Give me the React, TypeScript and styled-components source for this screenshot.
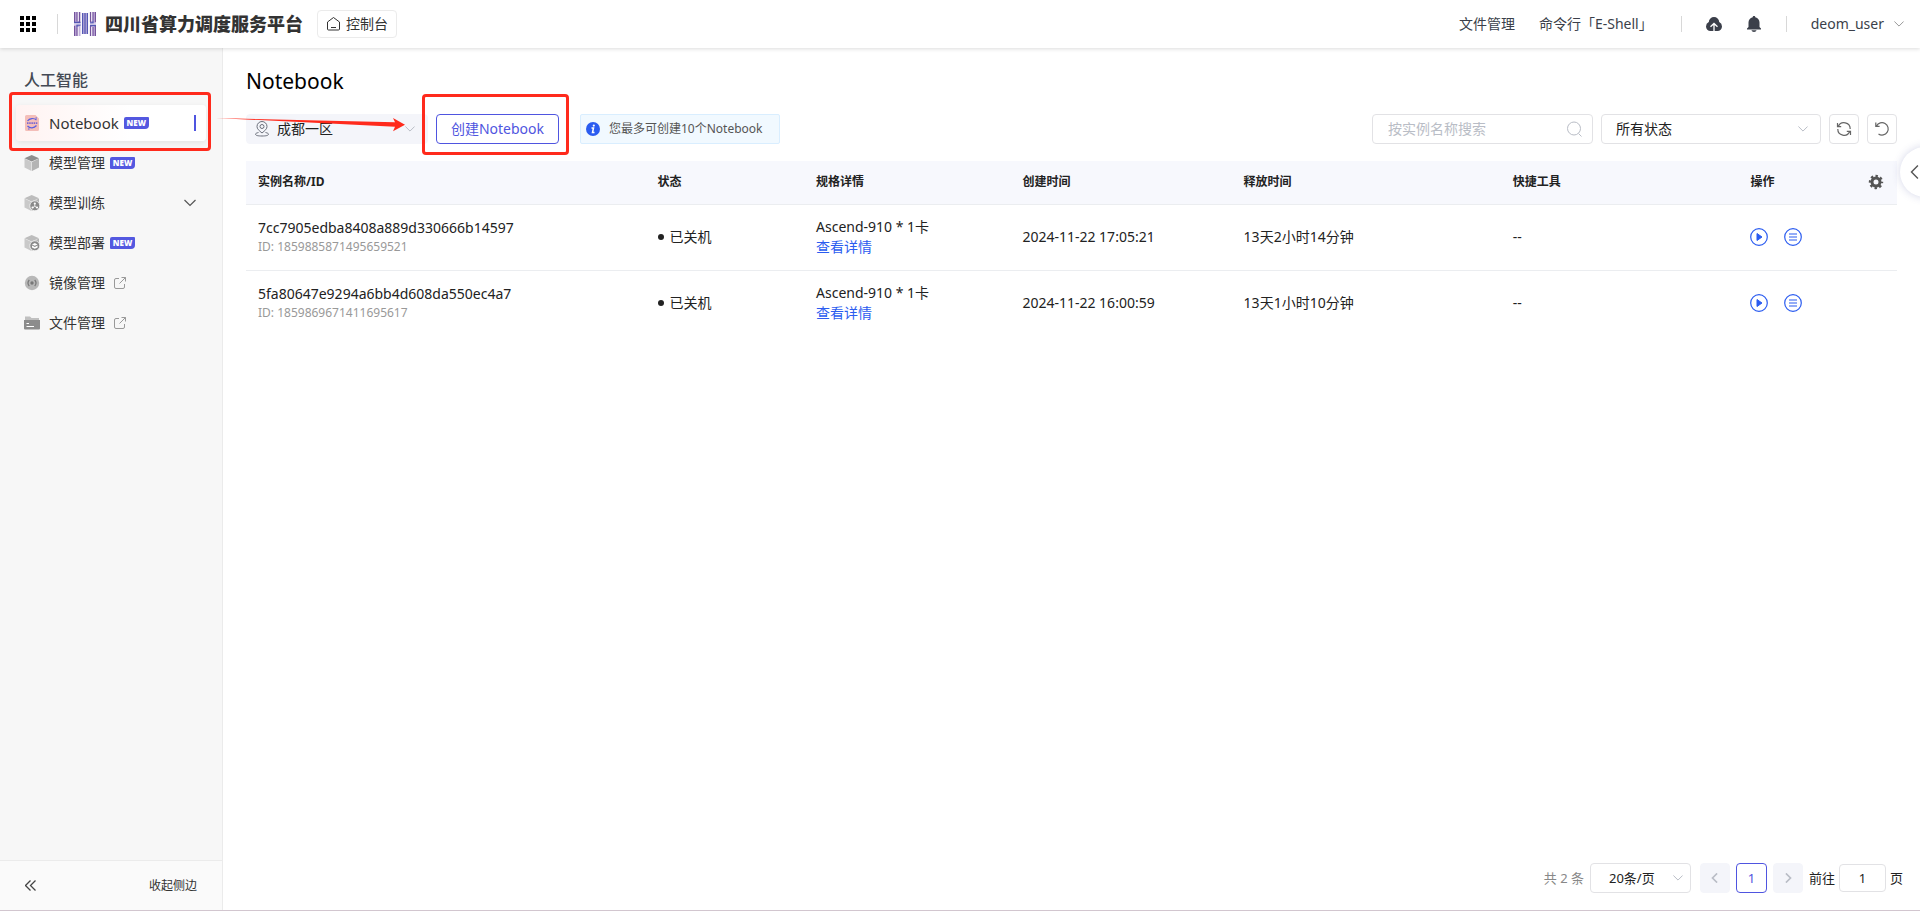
import React from "react";
import styled, { createGlobalStyle, css } from "styled-components";

const Global = createGlobalStyle`
  *, *::before, *::after { box-sizing: border-box; }
  body { margin: 0; background: #fff; color: #222; font: 14px/20px "Noto Sans", "Noto Sans CJK SC", sans-serif; }
  button, input, select { font: inherit; color: inherit; margin: 0; }
  button { cursor: pointer; padding: 0; background: none; border: 0; }
  h1, h2, ul { margin: 0; padding: 0; }
  a { text-decoration: none; color: inherit; }
  svg { display: block; flex: none; }
`;

const Page = styled.div`
  min-height: 100vh;
  display: flex;
  flex-direction: column;
  overflow: hidden;
  border-bottom: 1px solid #d2c6cf;
`;

const Header = styled.header`
  height: 48px;
  display: flex;
  align-items: center;
  padding: 0 16px 0 20px;
  background: #fff;
  box-shadow: 0 1px 4px rgba(0, 0, 0, 0.14);
  position: relative;
  z-index: 2;
`;
const Divider = styled.span<{ $h: number }>`
  width: 1px;
  height: ${(p) => p.$h}px;
  background: #d8d8d8;
`;
const Brand = styled.a`
  display: flex;
  align-items: center;
  gap: 9px;
  margin: 0 14px 0 16px;
  font-size: 18px;
  line-height: 24px;
  font-weight: 900;
  color: #333;
  white-space: nowrap;
`;
const AppsButton = styled.button`
  margin-right: 21px;
`;
const ConsoleLink = styled.a`
  display: flex;
  align-items: center;
  gap: 5px;
  height: 28px;
  padding: 0 8px;
  border: 1px solid #ebebeb;
  border-radius: 4px;
  color: #333;
`;
const HeaderNav = styled.nav`
  margin-left: auto;
  display: flex;
  align-items: center;
  gap: 24px;
  color: #3b3f4a;
  white-space: nowrap;
`;
const ShellLink = styled.a`
  margin-right: 4px;
`;
const UserButton = styled.button`
  display: flex;
  align-items: center;
  gap: 10px;
`;

const Body = styled.div`
  flex: 1;
  display: flex;
`;
const Sidebar = styled.aside`
  width: 223px;
  flex: none;
  display: flex;
  flex-direction: column;
  background: #f7f7f7;
  border-right: 1px solid #ebebeb;
`;
const SideTitle = styled.h2`
  padding: 20px 24px 0;
  font-size: 16px;
  line-height: 24px;
  font-weight: 500;
  color: #444a55;
`;
const Menu = styled.ul`
  list-style: none;
  padding: 13px 16px 0;
  display: flex;
  flex-direction: column;
  gap: 4px;
`;
const MenuItem = styled.li`
  position: relative;
`;
const MenuText = styled.span`
  margin: 0 5px 0 9px;
`;
const MenuLink = styled.a<{ $active?: boolean }>`
  display: flex;
  align-items: center;
  height: 36px;
  padding: 0 10px 0 8px;
  border-radius: 4px;
  color: #333;
  ${(p) =>
    p.$active &&
    css`
      font-size: 15px;
      background: linear-gradient(90deg, #fff3f2, #fff 60%);
      box-shadow: 0 2px 6px rgba(0, 0, 0, 0.08);
    `}
`;
const NewBadge = styled.span`
  height: 12px;
  width: 25px;
  text-align: center;
  border-radius: 2px 1px 4px 1px;
  background: #5358e0;
  color: #fff;
  font: 800 8px/12px "Open Sans", "Noto Sans", sans-serif;
`;
const ExternalMark = styled.span`
  margin-left: 4px;
`;
const ActiveBar = styled.i`
  width: 2px;
  height: 16px;
  margin-left: auto;
  background: #4f55e0;
`;
const Push = styled.span`
  margin-left: auto;
`;
const Collapse = styled.button`
  margin-top: auto;
  height: 50px;
  border-top: 1px solid #ebebeb;
  background: #fafafa;
  display: flex;
  align-items: center;
  justify-content: space-between;
  padding: 0 25px;
  font-size: 12px;
  color: #333;
`;

const Highlight = styled.div`
  position: absolute;
  inset: -13px -5px -10px -7px;
  border: 3px solid #ff2a1c;
  border-radius: 4px;
  pointer-events: none;
`;

const Main = styled.main`
  flex: 1;
  min-width: 0;
  display: flex;
  flex-direction: column;
  padding: 20px 23px 17px;
  position: relative;
`;
const Title = styled.h1`
  font-size: 21px;
  line-height: 26px;
  font-weight: 400;
  color: #000;
`;
const Toolbar = styled.div`
  display: flex;
  align-items: center;
  gap: 8px;
  margin: 20px 0 17px;
`;
const SelectWrap = styled.label<{ $kind?: "region" | "page" }>`
  position: relative;
  display: flex;
  align-items: center;
  height: 30px;
  width: ${(p) => (p.$kind === "region" ? 182 : p.$kind === "page" ? 101 : 220)}px;
  padding-right: ${(p) => (p.$kind === "page" ? 7 : 12)}px;
  border-radius: 4px;
  border: 1px solid ${(p) => (p.$kind === "region" ? "#f4f5fa" : "#e2e2e5")};
  background: ${(p) => (p.$kind === "region" ? "#f4f5fa" : "#fff")};
  padding-left: ${(p) => (p.$kind === "region" ? 8 : p.$kind === "page" ? 18 : 14)}px;
  select {
    appearance: none;
    border: 0;
    background: none;
    outline: none;
    flex: 1;
    min-width: 0;
    padding: 0 0 0 ${(p) => (p.$kind === "region" ? 8 : 0)}px;
  }
`;
const CreateBox = styled.div`
  position: relative;
  margin-right: 13px;
`;
const CreateButton = styled.button`
  display: block;
  width: 123px;
  height: 30px;
  border: 1px solid #4f55e0;
  border-radius: 4px;
  color: #4f55e0;
  background: #fff;
  white-space: nowrap;
`;
const CreateHighlight = styled(Highlight)`
  inset: -20px -10px -11px -14px;
`;
const Arrow = styled.svg`
  position: absolute;
  left: -7px;
  top: 64px;
  pointer-events: none;
`;
const Tip = styled.div`
  min-width: 200px;
  height: 30px;
  display: flex;
  align-items: center;
  gap: 9px;
  padding: 0 12px 0 5px;
  border: 1px solid #d9eeff;
  border-radius: 2px;
  background: #f1f9ff;
  font-size: 12px;
  color: #555;
  white-space: nowrap;
`;
const SearchBox = styled.label`
  margin-left: auto;
  width: 221px;
  height: 30px;
  display: flex;
  align-items: center;
  padding: 0 10px 0 15px;
  border: 1px solid #e2e2e5;
  border-radius: 4px;
  input {
    flex: 1;
    min-width: 0;
    border: 0;
    padding: 0;
    outline: none;
    background: none;
  }
  input::placeholder { color: #b9bdc6; opacity: 1; }
`;
const SquareButton = styled.button`
  width: 30px;
  height: 30px;
  display: grid;
  place-items: center;
  border: 1px solid #e2e2e5;
  border-radius: 4px;
  color: #666;
`;

const Table = styled.table`
  width: 100%;
  table-layout: fixed;
  border-collapse: collapse;
  text-align: left;
  th {
    height: 43px;
    padding: 0 12px;
    background: #f7f8fd;
    font-size: 12px;
    font-weight: 700;
    border-bottom: 1px solid #ebedf0;
  }
  th button { display: block; }
  td {
    height: 66px;
    padding: 0 12px;
    border-bottom: 1px solid #ebedf0;
  }
  tr:last-child td { border-bottom-color: transparent; }
`;
const SubText = styled.div`
  font-size: 12px;
  line-height: 18px;
  color: #999;
`;
const Status = styled.span`
  display: flex;
  align-items: center;
  gap: 6px;
  &::before {
    content: "";
    width: 6px;
    height: 6px;
    border-radius: 50%;
    background: #222;
  }
`;
const DetailLink = styled.a`
  color: #2b5cf0;
`;
const Actions = styled.div`
  display: flex;
  gap: 16px;
  color: #2b5cf0;
`;
const Footer = styled.footer`
  margin: auto -6px 0 0;
  display: flex;
  align-items: center;
  justify-content: flex-end;
  white-space: nowrap;
  gap: 6px;
  font-size: 13px;
`;
const Total = styled.span`
  color: #888;
`;
const Pages = styled.div`
  display: flex;
  gap: 6px;
  margin-left: 3px;
`;
const PageButton = styled.button<{ $current?: boolean }>`
  width: ${(p) => (p.$current ? 31 : 30)}px;
  height: 30px;
  display: grid;
  place-items: center;
  border-radius: 4px;
  background: ${(p) => (p.$current ? "#fff" : "#f4f5fa")};
  color: ${(p) => (p.$current ? "#4f55e0" : "#b5b9c4")};
  border: 1px solid ${(p) => (p.$current ? "#4f55e0" : "#f4f5fa")};
`;
const Jump = styled.label`
  display: flex;
  align-items: center;
  gap: 4px;
  input {
    width: 47px;
    height: 28px;
    border: 1px solid #e2e2e5;
    border-radius: 4px;
    padding: 0;
    text-align: center;
  }
`;
const DrawerHandle = styled.button`
  position: absolute;
  right: -30px;
  top: 99px;
  width: 50px;
  height: 50px;
  border-radius: 50%;
  background: #fff;
  box-shadow: 0 0 8px rgba(60, 70, 150, 0.22);
  display: flex;
  align-items: center;
  padding-left: 8px;
`;

const Chevron = ({
  dir = "down",
  size = 10,
  color = "#b9bdc6",
  weight = 1.2,
}: {
  dir?: "down" | "left" | "right";
  size?: number;
  color?: string;
  weight?: number;
}) => (
  <svg width={size} height={size} viewBox="0 0 12 12" fill="none" stroke={color} strokeWidth={weight}>
    <path d={dir === "down" ? "M.5 3 6 8.5 11.5 3" : dir === "left" ? "M8.500.5 3 6l5.500 5.500" : "M3.500.5 9 6l-5.500 5.500"} />
  </svg>
);

const AppsIcon = () => (
  <svg width="16" height="16" viewBox="0 0 16 16">
    {[0, 6, 12].map((y) => [0, 6, 12].map((x) => <rect key={`${x}-${y}`} x={x} y={y} width="4" height="4" />))}
  </svg>
);

const Logo = () => (
  <svg width="22" height="24" viewBox="0 0 22 24" fill="none">
    <path fill="#c3b2dc" d="M0 0h6.500v24H0zM8 1h6v21H8zM16 0h6v24h-6z" />
    <path stroke="#74539c" strokeWidth="1.200" d="M.6 0v10M3 0v9.500M5.500 0v10M.6 24V14M3 24v-8.500M16.500 0v10M19 0v8.500M21.400 0v10M16.500 24V13.500M19 24v-9M21.400 24V14" />
    <path stroke="#5358b4" strokeWidth="1.300" d="M0 10.500h6.500M3 15.500V13h3.500M16 13.500h6M19 8.500V11h-3M8.600 1v21M11 1v21M13.400 1v21" />
    <path stroke="#fff" strokeWidth=".8" d="M0 12h6.500M16 12h6M4.300 0v9M4.300 24v-9M17.700 0v9M17.700 24v-9" />
  </svg>
);

const HomeIcon = () => (
  <svg width="15" height="16" viewBox="0 0 15 16" fill="none" stroke="#333">
    <path d="M1.500 6 7.500 1.500l6 4.500v7a1 1 0 0 1-1 1h-10a1 1 0 0 1-1-1zM5 11.500h5" />
  </svg>
);

const CloudIcon = () => (
  <svg width="16" height="16" viewBox="0 0 16 16">
    <path fill="#3b3f4a" d="M8 1a5.200 5.200 0 0 1 5.200 5A5 5 0 0 1 16 10.500C16 13.200 14 15 11.500 15h-7C2 15 0 13.200 0 10.500A5 5 0 0 1 2.800 6 5.200 5.200 0 0 1 8 1z" />
    <path fill="none" stroke="#fff" strokeWidth="1.300" d="M8 15V7.800M4.500 10.800 8 7.500l3.500 3.300" />
  </svg>
);

const BellIcon = () => (
  <svg width="16" height="18" viewBox="0 0 16 18" fill="#3b3f4a">
    <path d="M8 1c.8 0 1.300.5 1.300 1.200C12 2.800 13.500 5 13.500 7.500V12l1.500 1.500v1H1v-1L2.500 12V7.500C2.500 5 4 2.800 6.700 2.200 6.700 1.500 7.200 1 8 1zM5.500 15.300h5C10.300 16.500 9.200 17 8 17s-2.300-.5-2.500-1.700z" />
  </svg>
);

const NotebookIcon = () => (
  <svg width="16" height="16" viewBox="0 0 16 16" fill="none">
    <path fill="#f4beb9" d="M2.500 0h9L15 3.500v11A1.500 1.500 0 0 1 13.500 16h-11A1.500 1.500 0 0 1 1 14.500v-13A1.500 1.500 0 0 1 2.500 0z" />
    <path stroke="#5a5ee0" strokeWidth="1.200" d="M3.500 6C5.500 3 10 2.800 12.500 5M3.500 11c2.500 2.700 6.500 2.500 9-.5M4 14h1.500M11.500 3h1.500" />
    <path stroke="#7b68d0" strokeWidth="1.800" strokeDasharray="1.500 .7" d="M3 8.200h10.500" />
  </svg>
);

const Cube = () => (
  <>
    <path fill="#c9c9c9" d="M.5 3.500 7.500 7v9L.5 12.500z" />
    <path fill="#b4b4b4" d="M15 3.500 8 7v9l7-3.500z" />
  </>
);
const ModelIcon = () => (
  <svg width="16" height="16" viewBox="0 0 16 16">
    <Cube />
    <path fill="#8e8e8e" d="M7.700 0 15 3.200 7.700 6.600.5 3.200z" />
  </svg>
);
const CubeBadge = ({ children }: { children: React.ReactNode }) => (
  <svg width="16" height="16" viewBox="0 0 16 16">
    <Cube />
    <path fill="#bdbdbd" d="M7.700 0 15 3.200 7.700 6.600.5 3.200z" />
    <circle cx="10.800" cy="10.800" r="5" fill="#8a8a8a" stroke="#f7f7f7" strokeWidth=".8" />
    {children}
  </svg>
);
const TrainIcon = () => (
  <CubeBadge>
    <path fill="none" stroke="#fff" strokeWidth=".8" d="M10.800 8.500v2.700l-2.200 1.600M10.800 11.200l2.200 1.600" />
    <g fill="#fff">
      <circle cx="10.800" cy="8.500" r="1.100" />
      <circle cx="8.600" cy="12.500" r="1.100" />
      <circle cx="13" cy="12.500" r="1.100" />
    </g>
  </CubeBadge>
);
const DeployIcon = () => (
  <CubeBadge>
    <path fill="#fff" d="M10.800 8l2.800 1.400-2.800 1.400L8 9.400zM8 10.600l2.800 1.400 2.800-1.400v1.800l-2.800 1.400L8 12.400z" />
  </CubeBadge>
);
const ImageIcon = () => (
  <svg width="16" height="16" viewBox="0 0 16 16">
    <circle cx="8" cy="8" r="7.200" fill="#b8b8b8" />
    <circle cx="8" cy="8" r="1.700" fill="#777" />
    <path fill="none" stroke="#777" strokeWidth="1.200" d="M5.300 5a4.500 4.500 0 0 0 0 6M10.700 5a4.500 4.500 0 0 1 0 6" />
  </svg>
);
const FolderIcon = () => (
  <svg width="16" height="16" viewBox="0 0 16 16">
    <path fill="#c0c0c0" d="M1 1.500h5L7.500 3H15v10H1z" />
    <path fill="#8c8c8c" d="M0 5h16v8.500a1 1 0 0 1-1 1H1a1 1 0 0 1-1-1z" />
    <path stroke="#fff" d="M2.500 8.500h2.500M2.500 11.500h7.500" />
  </svg>
);
const ExternalIcon = () => (
  <svg width="12" height="12" viewBox="0 0 12 12" fill="none" stroke="#999">
    <path d="M5 1.500H2A1.500 1.500 0 0 0 .5 3v7A1.500 1.500 0 0 0 2 11.500h7a1.500 1.500 0 0 0 1.500-1.500V7M7.500.5h4v4M11.500.5l-6 6" />
  </svg>
);
const PinIcon = () => (
  <svg width="14" height="16" viewBox="0 0 14 16" fill="none" stroke="#6b6f7b">
    <path d="M7 12C4 9.500 2 8 2 5.500a5 5 0 0 1 10 0C12 8 10 9.500 7 12z" />
    <circle cx="7" cy="5.500" r="2" />
    <path d="M3.500 11.500c-2 .5-3 1-3 1.700C.5 14.500 3 15 7 15s6.500-.5 6.500-1.800c0-.7-1-1.200-3-1.700" />
  </svg>
);
const InfoIcon = () => (
  <svg width="14" height="14" viewBox="0 0 14 14">
    <circle cx="7" cy="7" r="7" fill="#2b5cf0" />
    <circle cx="7.800" cy="3.600" r="1.100" fill="#fff" />
    <path fill="none" stroke="#fff" strokeWidth="1.500" d="M5.500 6h2l-1 4.500h2" />
  </svg>
);
const SearchIcon = () => (
  <svg width="15" height="16" viewBox="0 0 15 16" fill="none" stroke="#b9bdc6">
    <circle cx="7" cy="7.500" r="6.500" />
    <path d="M11.500 12.500l3 3" />
  </svg>
);
const RefreshIcon = () => (
  <svg width="16" height="16" viewBox="0 0 16 16" fill="none" stroke="currentColor" strokeWidth="1.200">
    <path d="M2.300 5.500A6.200 6.200 0 0 1 14.200 8M13.700 10.500A6.200 6.200 0 0 1 1.800 8M1.500 2v3.700H5.200M14.500 14v-3.700H10.800" />
  </svg>
);
const ResetIcon = () => (
  <svg width="16" height="16" viewBox="0 0 16 16" fill="none" stroke="currentColor" strokeWidth="1.200">
    <path d="M2.500 5A6.200 6.200 0 1 1 4.500 13M1.800 1.500v3.800h3.800" />
  </svg>
);
const GearIcon = () => (
  <svg width="16" height="16" viewBox="0 0 16 16" fill="none" stroke="#555">
    <circle cx="8" cy="8" r="4" strokeWidth="3" />
    <circle cx="8" cy="8" r="6" strokeWidth="2.400" strokeDasharray="2.400 2.312" strokeDashoffset="1.200" />
  </svg>
);
const PlayIcon = () => (
  <svg width="18" height="20" viewBox="0 0 18 20" fill="none" stroke="currentColor">
    <circle cx="9" cy="10" r="8.300" strokeWidth="1.200" />
    <path fill="currentColor" d="M7 6.500l5 3.500-5 3.500z" />
  </svg>
);
const ListIcon = () => (
  <svg width="18" height="20" viewBox="0 0 18 20" fill="none" stroke="currentColor" strokeWidth="1.200">
    <circle cx="9" cy="10" r="8.300" />
    <path d="M5 7h8M5 10h8M5 13h8" />
  </svg>
);
const CollapseIcon = () => (
  <svg width="11" height="11" viewBox="0 0 11 11" fill="none" stroke="#444" strokeWidth="1.300">
    <path d="M5.500.5l-5 5 5 5M10.500.5l-5 5 5 5" />
  </svg>
);

const menu = [
  { text: "Notebook", icon: <NotebookIcon />, isNew: true, active: true },
  { text: "模型管理", icon: <ModelIcon />, isNew: true },
  { text: "模型训练", icon: <TrainIcon />, expandable: true },
  { text: "模型部署", icon: <DeployIcon />, isNew: true },
  { text: "镜像管理", icon: <ImageIcon />, external: true },
  { text: "文件管理", icon: <FolderIcon />, external: true },
];

const columns = ["24.2%", "9.6%", "12.5%", "13.4%", "16.3%", "14.4%", "auto", "41px"];

const rows = [
  { name: "7cc7905edba8408a889d330666b14597", id: "1859885871495659521", created: "2024-11-22 17:05:21", release: "13天2小时14分钟" },
  { name: "5fa80647e9294a6bb4d608da550ec4a7", id: "1859869671411695617", created: "2024-11-22 16:00:59", release: "13天1小时10分钟" },
];

const Col = styled.col<{ $w: string }>`
  width: ${(p) => p.$w};
`;

export default function App() {
  return (
    <>
      <Global />
      <Page>
        <Header>
          <AppsButton aria-label="应用"><AppsIcon /></AppsButton>
          <Divider $h={20} />
          <Brand href="#"><Logo />四川省算力调度服务平台</Brand>
          <ConsoleLink href="#"><HomeIcon />控制台</ConsoleLink>
          <HeaderNav>
            <a href="#">文件管理</a>
            <ShellLink href="#">命令行「E-Shell」</ShellLink>
            <Divider $h={16} />
            <button aria-label="上传"><CloudIcon /></button>
            <button aria-label="通知"><BellIcon /></button>
            <Divider $h={16} />
            <UserButton>deom_user<Chevron color="#999" /></UserButton>
          </HeaderNav>
        </Header>
        <Body>
          <Sidebar>
            <SideTitle>人工智能</SideTitle>
            <Menu>
              {menu.map((m) => (
                <MenuItem key={m.text}>
                  <MenuLink href="#" $active={m.active}>
                    {m.icon}
                    <MenuText>{m.text}</MenuText>
                    {m.isNew && <NewBadge>NEW</NewBadge>}
                    {m.external && <ExternalMark><ExternalIcon /></ExternalMark>}
                    {m.active && <ActiveBar />}
                    {m.expandable && <Push><Chevron size={12} color="#555" /></Push>}
                  </MenuLink>
                  {m.active && <Highlight />}
                </MenuItem>
              ))}
            </Menu>
            <Collapse><CollapseIcon />收起侧边</Collapse>
          </Sidebar>
          <Main>
            <Title>Notebook</Title>
            <Toolbar>
              <SelectWrap $kind="region">
                <PinIcon />
                <select aria-label="区域"><option>成都一区</option></select>
                <Chevron />
              </SelectWrap>
              <CreateBox>
                <CreateButton>创建Notebook</CreateButton>
                <CreateHighlight />
              </CreateBox>
              <Tip><InfoIcon />您最多可创建10个Notebook</Tip>
              <SearchBox>
                <input aria-label="搜索" placeholder="按实例名称搜索" />
                <SearchIcon />
              </SearchBox>
              <SelectWrap>
                <select aria-label="状态"><option>所有状态</option></select>
                <Chevron />
              </SelectWrap>
              <SquareButton aria-label="刷新"><RefreshIcon /></SquareButton>
              <SquareButton aria-label="重置"><ResetIcon /></SquareButton>
            </Toolbar>
            <Table>
              <colgroup>
                {columns.map((w, i) => <Col key={i} $w={w} />)}
              </colgroup>
              <thead>
                <tr>
                  <th>实例名称/ID</th><th>状态</th><th>规格详情</th><th>创建时间</th><th>释放时间</th><th>快捷工具</th><th>操作</th>
                  <th><button aria-label="列设置"><GearIcon /></button></th>
                </tr>
              </thead>
              <tbody>
                {rows.map((r) => (
                  <tr key={r.id}>
                    <td>{r.name}<SubText>ID: {r.id}</SubText></td>
                    <td><Status>已关机</Status></td>
                    <td>Ascend-910 * 1卡<br /><DetailLink href="#">查看详情</DetailLink></td>
                    <td>{r.created}</td>
                    <td>{r.release}</td>
                    <td>--</td>
                    <td colSpan={2}>
                      <Actions>
                        <button aria-label="启动"><PlayIcon /></button>
                        <button aria-label="更多"><ListIcon /></button>
                      </Actions>
                    </td>
                  </tr>
                ))}
              </tbody>
            </Table>
            <Footer>
              <Total>共 2 条</Total>
              <SelectWrap $kind="page">
                <select aria-label="每页条数"><option>20条/页</option></select>
                <Chevron />
              </SelectWrap>
              <Pages>
                <PageButton aria-label="上一页"><Chevron dir="left" weight={2} /></PageButton>
                <PageButton $current>1</PageButton>
                <PageButton aria-label="下一页"><Chevron dir="right" weight={2} /></PageButton>
              </Pages>
              <Jump>前往<input defaultValue="1" />页</Jump>
            </Footer>
            <Arrow width="190" height="20" viewBox="0 0 190 20">
              <path fill="#ff2a1c" d="M0 6 179 10.300 177 6 189 12.700 177 19.300 179 14.800z" />
            </Arrow>
            <DrawerHandle aria-label="展开"><Chevron dir="left" size={14} color="#555" /></DrawerHandle>
          </Main>
        </Body>
      </Page>
    </>
  );
}
